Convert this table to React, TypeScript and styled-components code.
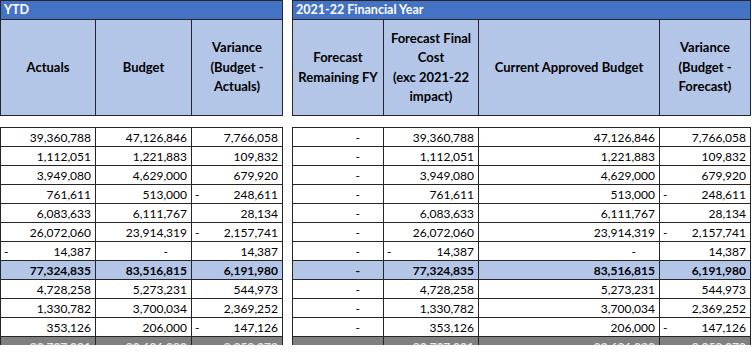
import React from 'react'
import styled, { createGlobalStyle } from 'styled-components'

type Tone = 'plain' | 'total' | 'grand'

interface Row {
  actuals: number
  budget: number
  variance: number
  tone: Tone
}

const rows: Row[] = [
  { actuals: 39360788, budget: 47126846, variance: 7766058, tone: 'plain' },
  { actuals: 1112051, budget: 1221883, variance: 109832, tone: 'plain' },
  { actuals: 3949080, budget: 4629000, variance: 679920, tone: 'plain' },
  { actuals: 761611, budget: 513000, variance: -248611, tone: 'plain' },
  { actuals: 6083633, budget: 6111767, variance: 28134, tone: 'plain' },
  { actuals: 26072060, budget: 23914319, variance: -2157741, tone: 'plain' },
  { actuals: -14387, budget: 0, variance: 14387, tone: 'plain' },
  { actuals: 77324835, budget: 83516815, variance: 6191980, tone: 'total' },
  { actuals: 4728258, budget: 5273231, variance: 544973, tone: 'plain' },
  { actuals: 1330782, budget: 3700034, variance: 2369252, tone: 'plain' },
  { actuals: 353126, budget: 206000, variance: -147126, tone: 'plain' },
  { actuals: 83737001, budget: 92696080, variance: 8959079, tone: 'grand' },
]

const GlobalStyle = createGlobalStyle`
  body {
    margin: 0;
    background: #fff;
    font-family: Lato, 'Liberation Sans', sans-serif;
    color: #000;
  }
`

// the sheet is cropped just under the top of the grand total row
const Page = styled.div`
  display: flex;
  align-items: flex-start;
  gap: 9px;
  height: 345px;
  overflow: hidden;
`

const Panel = styled.section<{ $width: number }>`
  width: ${(p) => p.$width}px;
  flex: none;
`

const Title = styled.div`
  height: 19px;
  box-sizing: border-box;
  border: 1px solid #262626;
  border-bottom: none;
  background: #4472c4;
  color: #fff;
  font-weight: 700;
  font-size: 12.5px;
  line-height: 18px;
  padding-left: 3px;
`

const Grid = styled.div<{ $cols: string }>`
  display: grid;
  grid-template-columns: ${(p) => p.$cols};
  gap: 1px;
  padding: 1px;
  background: #262626;
`

const HeadGrid = styled(Grid)`
  grid-template-rows: 95px;
`

const HeadCell = styled.div`
  background: #b4c6e7;
  display: flex;
  align-items: center;
  justify-content: center;
  text-align: center;
  font-weight: 700;
  font-size: 13px;
  line-height: 19.5px;
`

const Spacer = styled.div`
  height: 11px;
`

const BodyGrid = styled(Grid)`
  grid-auto-rows: 18px;
`

const toneBg = { plain: '#fff', total: '#b4c6e7', grand: '#808080' }

const Cell = styled.div<{ $tone: Tone }>`
  background: ${(p) => toneBg[p.$tone]};
  color: ${(p) => (p.$tone === 'grand' ? '#e6e6e6' : '#000')};
  font-weight: ${(p) => (p.$tone === 'plain' ? 400 : 700)};
  display: flex;
  align-items: center;
  justify-content: flex-end;
  padding: 0 4px 0 3px;
  font-size: 12px;
  white-space: nowrap;
`

const Neg = styled.span`
  margin-right: auto;
`

const Zero = styled.span`
  padding-right: 19px;
`

const fmt = (n: number) => Math.abs(n).toLocaleString('en-US')

const Amount = ({ value, tone }: { value: number; tone: Tone }) => (
  <Cell $tone={tone}>
    {value === 0 ? (
      <Zero>-</Zero>
    ) : (
      <>
        {value < 0 && <Neg>-</Neg>}
        {fmt(value)}
      </>
    )}
  </Cell>
)

const App = () => (
  <>
    <GlobalStyle />
    <Page>
      <Panel $width={283}>
        <Title>YTD</Title>
        <HeadGrid $cols="94px 95px 90px">
          <HeadCell>Actuals</HeadCell>
          <HeadCell>Budget</HeadCell>
          <HeadCell>
            Variance
            <br />
            (Budget -<br />
            Actuals)
          </HeadCell>
        </HeadGrid>
        <Spacer />
        <BodyGrid $cols="94px 95px 90px">
          {rows.map((r, i) => (
            <React.Fragment key={i}>
              <Amount value={r.actuals} tone={r.tone} />
              <Amount value={r.budget} tone={r.tone} />
              <Amount value={r.variance} tone={r.tone} />
            </React.Fragment>
          ))}
        </BodyGrid>
      </Panel>
      <Panel $width={459}>
        <Title>2021-22 Financial Year</Title>
        <HeadGrid $cols="90px 94px 180px 90px">
          <HeadCell>
            Forecast
            <br />
            Remaining FY
          </HeadCell>
          <HeadCell>
            Forecast Final
            <br />
            Cost
            <br />
            (exc 2021-22
            <br />
            impact)
          </HeadCell>
          <HeadCell>Current Approved Budget</HeadCell>
          <HeadCell>
            Variance
            <br />
            (Budget -<br />
            Forecast)
          </HeadCell>
        </HeadGrid>
        <Spacer />
        <BodyGrid $cols="90px 94px 180px 90px">
          {rows.map((r, i) => (
            <React.Fragment key={i}>
              <Amount value={0} tone={r.tone} />
              <Amount value={r.actuals} tone={r.tone} />
              <Amount value={r.budget} tone={r.tone} />
              <Amount value={r.variance} tone={r.tone} />
            </React.Fragment>
          ))}
        </BodyGrid>
      </Panel>
    </Page>
  </>
)

export default App
